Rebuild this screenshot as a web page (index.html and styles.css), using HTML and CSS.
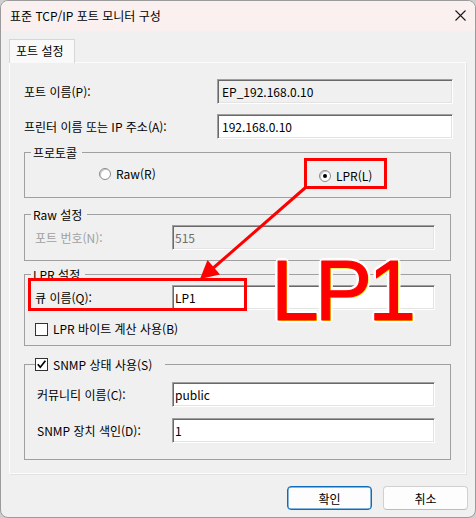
FILE: index.html
```html
<!DOCTYPE html>
<html lang="ko">
<head>
<meta charset="utf-8">
<title>표준 TCP/IP 포트 모니터 구성</title>
<link rel="stylesheet" href="styles.css">
</head>
<body>
<div class="window">
  <div class="titlebar">
    <span class="title">표준 TCP/IP 포트 모니터 구성</span>
    <svg class="close" width="11" height="11" viewBox="0 0 11 11"><path d="M0.5 0.5 L10.5 10.5 M10.5 0.5 L0.5 10.5" stroke="#1a1a1a" stroke-width="1.1" fill="none"/></svg>
  </div>
  <div class="content">
    <div class="tabs"><div class="tab">포트 설정</div></div>
    <div class="panel">
      <div class="row row-first">
        <span class="lbl lbl-wide">포트 이름(P):</span>
        <input class="field field-wide field-off" value="EP_192.168.0.10" readonly>
      </div>
      <div class="row row-second">
        <span class="lbl lbl-wide">프린터 이름 또는 IP 주소(A):</span>
        <input class="field field-wide" value="192.168.0.10">
      </div>

      <fieldset class="group group-protocol">
        <legend class="legend">프로토콜</legend>
        <div class="group-body radios">
          <span class="radio-item radio-raw"><span class="radio"></span>Raw(R)</span>
          <span class="radio-item radio-lpr"><span class="radio radio-on"></span>LPR(L)</span>
        </div>
      </fieldset>

      <fieldset class="group group-raw">
        <legend class="legend">Raw 설정</legend>
        <div class="group-body">
          <div class="row">
            <span class="lbl lbl-narrow lbl-dim">포트 번호(N):</span>
            <input class="field field-narrow field-off field-dim" value="515" readonly>
          </div>
        </div>
      </fieldset>

      <fieldset class="group group-lpr">
        <legend class="legend">LPR 설정</legend>
        <div class="group-body">
          <div class="row">
            <span class="lbl lbl-narrow">큐 이름(Q):</span>
            <input class="field field-narrow" value="LP1">
          </div>
          <div class="check-row">
            <span class="checkbox"></span>LPR 바이트 계산 사용(B)
          </div>
        </div>
      </fieldset>

      <fieldset class="group group-snmp">
        <legend class="legend legend-check">
          <span class="checkbox"><svg width="11" height="11" viewBox="0 0 11 11"><path d="M1.8 5.2 L4.3 8.2 L9.4 1.8" stroke="#000" stroke-width="1.7" fill="none"/></svg></span>SNMP 상태 사용(S)
        </legend>
        <div class="group-body">
          <div class="row">
            <span class="lbl lbl-narrow lbl-indent">커뮤니티 이름(C):</span>
            <input class="field field-narrow" value="public">
          </div>
          <div class="row row-gap">
            <span class="lbl lbl-narrow lbl-indent">SNMP 장치 색인(D):</span>
            <input class="field field-narrow" value="1">
          </div>
        </div>
      </fieldset>
    </div>
    <div class="buttons">
      <button class="btn btn-primary">확인</button>
      <button class="btn">취소</button>
    </div>
  </div>
</div>

<svg class="annotations" width="476" height="518" viewBox="0 0 476 518">
  <rect x="305.5" y="159.5" width="80" height="28" fill="none" stroke="#ff0000" stroke-width="3"/>
  <rect x="29.5" y="279.5" width="216" height="30" fill="none" stroke="#ff0000" stroke-width="3"/>
  <line x1="305" y1="188" x2="211" y2="270" stroke="#ff0000" stroke-width="3"/>
  <polygon points="200,279 220,274.5 207.5,260" fill="#ff0000"/>
</svg>
<div class="callout">LP1</div>
</body>
</html>
```

FILE: styles.css
```css
* { box-sizing: border-box; }

html, body { margin: 0; padding: 0; }

body {
  position: relative;
  width: 476px;
  height: 518px;
  background: #cfcfcf;
  font-family: "Noto Sans CJK KR", "Liberation Sans", sans-serif;
  font-size: 12px;
  color: #000;
  overflow: hidden;
}

.window {
  width: 476px;
  height: 518px;
  border: 1px solid #9b9b9b;
  border-radius: 8px;
  overflow: hidden;
  background: #f0f0f0;
  display: flex;
  flex-direction: column;
}

.titlebar {
  height: 30px;
  flex-shrink: 0;
  background: #f9f0ef;
  display: flex;
  align-items: center;
  justify-content: space-between;
  padding: 0 9px 1px 9px;
}

.title { line-height: 16px; }

.close { display: block; }

.content {
  flex: 1;
  display: flex;
  flex-direction: column;
  padding: 8px 0 0 8px;
}

.tabs { display: flex; height: 23px; }

.tab {
  width: 66px;
  height: 24px;
  position: relative;
  z-index: 1;
  background: #f9f9f9;
  border: 1px solid #d6d6d6;
  border-bottom: none;
  line-height: 21px;
  padding-left: 6px;
}

.panel {
  width: 457px;
  height: 412px;
  border: 1px solid #fcfcfc;
  box-shadow: 1px 1px 0 #e2e2e2;
  padding: 0 14px;
  background: #f0f0f0;
}

.row {
  display: flex;
  align-items: center;
}

.row-first { margin-top: 16px; }
.row-second { margin-top: 10px; }
.row-gap { margin-top: 11px; }

.lbl {
  display: block;
  flex-shrink: 0;
  white-space: nowrap;
  line-height: 16px;
}

.lbl-wide { width: 193px; }
.lbl-narrow { width: 137px; }
.lbl-indent { padding-left: 2px; }
.lbl-dim { color: #a0a0a0; }

.field {
  flex-shrink: 0;
  height: 25px;
  border: 1px solid;
  border-color: #a0a0a0 #ffffff #ffffff #a0a0a0;
  box-shadow: inset 1px 1px 0 #696969, inset -1px -1px 0 #e3e3e3;
  background: #ffffff;
  font: inherit;
  color: #000;
  outline: none;
  margin: 0;
}

.field-wide { width: 236px; padding: 0 4px; }
.field-narrow { width: 263px; padding: 0 2px; }
.field-off { background: #f0f0f0; }
.field-dim { color: #6d6d6d; }

.group {
  margin: 0;
  padding: 0;
  min-width: 0;
  border: 1px solid #a0a0a0;
}

.legend {
  margin-left: 6px;
  padding: 0 5px 0 2px;
  height: 17px;
  line-height: 17px;
  white-space: nowrap;
}

.legend-check {
  display: flex;
  align-items: center;
  margin-left: 10px;
  padding: 0 13px 0 0;
  gap: 5px;
}

.group-protocol { margin-top: 5px; }
.group-raw { margin-top: 8px; }
.group-lpr { margin-top: 5px; }
.group-snmp { margin-top: 10px; }

.group-body { padding-left: 10px; }

.group-protocol .group-body { padding-top: 5px; padding-bottom: 13px; }
.group-raw .group-body { padding-top: 2px; padding-bottom: 10px; }
.group-lpr .group-body { padding-top: 2px; padding-bottom: 8px; }
.group-snmp .group-body { padding-top: 9px; padding-bottom: 16px; }

.radios {
  display: flex;
  align-items: flex-start;
}

.radio-item {
  display: flex;
  align-items: center;
  gap: 5px;
  height: 16px;
  line-height: 16px;
}

.radio-raw { margin-left: 64px; width: 220px; }
.radio-lpr { margin-top: 2px; }

.radio {
  width: 12px;
  height: 12px;
  border-radius: 50%;
  border: 1px solid #8a8a8a;
  background: #ffffff;
  box-shadow: inset 1px 1px 0 #c8c8c8;
  display: flex;
  align-items: center;
  justify-content: center;
  flex-shrink: 0;
}

.radio-on::after {
  content: "";
  width: 4px;
  height: 4px;
  border-radius: 50%;
  background: #000;
}

.check-row {
  display: flex;
  align-items: center;
  gap: 5px;
  height: 16px;
  margin-top: 11px;
  line-height: 16px;
}

.checkbox {
  width: 13px;
  height: 13px;
  border: 1px solid #333333;
  background: #ffffff;
  flex-shrink: 0;
  display: flex;
}

.checkbox svg { display: block; }

.buttons {
  display: flex;
  justify-content: flex-end;
  gap: 11px;
  margin-top: 12px;
  padding-right: 7px;
}

.btn {
  width: 85px;
  height: 24px;
  border: 1px solid #d0d0d0;
  border-bottom-color: #bcbcbc;
  border-radius: 4px;
  background: #fdfdfd;
  font: inherit;
  color: #000;
  padding: 0;
  margin: 0;
}

.btn-primary {
  border-color: #0f6cbd;
  box-shadow: inset 0 0 0 0.5px #0f6cbd;
}

.annotations {
  position: absolute;
  left: 0;
  top: 0;
  pointer-events: none;
}

.callout {
  position: absolute;
  left: 271px;
  top: 247px;
  font-family: "Liberation Sans", Arial, sans-serif;
  font-size: 86px;
  line-height: 86px;
  letter-spacing: -4px;
  color: #ff0000;
  -webkit-text-stroke: 1px #ff0000;
  text-shadow:
    1px 1px 0 #f5e600,
    3px 0 0 #fff, -3px 0 0 #fff, 0 3px 0 #fff, 0 -3px 0 #fff,
    2px 2px 0 #fff, -2px -2px 0 #fff, 2px -2px 0 #fff, -2px 2px 0 #fff;
  pointer-events: none;
}
```
